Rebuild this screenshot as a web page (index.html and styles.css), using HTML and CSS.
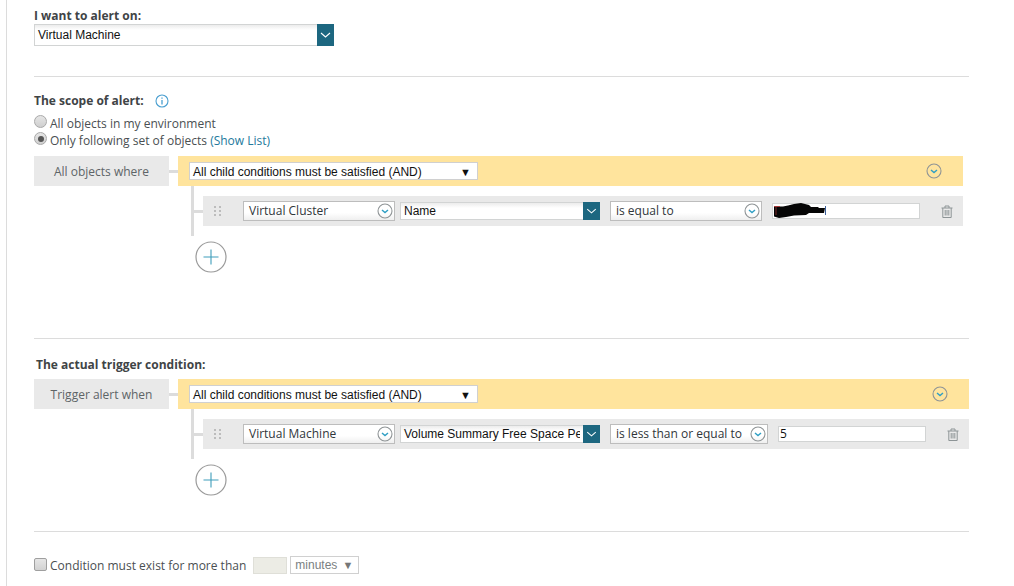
FILE: index.html
```html
<!DOCTYPE html>
<html lang="en">
<head>
<meta charset="utf-8">
<title>Alert</title>
<link rel="stylesheet" href="styles.css">
</head>
<body>
<svg class="defs" width="0" height="0" aria-hidden="true">
  <symbol id="circ" viewBox="0 0 16 16"><circle cx="8" cy="8" r="7" fill="none" stroke="#8f9496" stroke-width="1.1"/><path d="M5 7l3 2.6L11 7" fill="none" stroke="#2f9fc4" stroke-width="1.4"/></symbol>
  <symbol id="chev" viewBox="0 0 17 19"><path d="M4 7.5l4.5 4 4.500-4" fill="none" stroke="#fff" stroke-width="1.1"/></symbol>
  <symbol id="grip" viewBox="0 0 7 10"><path d="M0 0h2v2H0zM5 0h2v2H5zM0 4h2v2H0zM5 4h2v2H5zM0 8h2v2H0zM5 8h2v2H5z" fill="#bcbcbc"/></symbol>
  <symbol id="trash" viewBox="0 0 12 13"><path d="M.5 3h11M4 3V1h4v2M1.800 3v9.500h8.400V3M4.200 5v5.500M6 5v5.500M7.800 5v5.500" fill="none" stroke="#8d9496" stroke-width="1"/></symbol>
  <symbol id="plus" viewBox="0 0 32 32"><circle cx="16" cy="16" r="15" fill="#fff" stroke="#9a9a9a" stroke-width="1.200"/><path d="M16 8.500v15M8.500 16h15" fill="none" stroke="#3f9dbb" stroke-width="1.100"/></symbol>
</svg>
<main class="page">
  <section class="sec-target">
    <h2 class="head">I want to alert on:</h2>
    <div class="combo combo-target"><span class="combo-text">Virtual Machine</span><span class="combo-btn"><svg class="chev"><use href="#chev"/></svg></span></div>
  </section>
  <hr class="rule rule-a">
  <section class="sec-scope">
    <h2 class="head head-icon">The scope of alert:
      <svg class="info" viewBox="0 0 14 14"><circle cx="7" cy="7" r="6" fill="none" stroke="#4a9fd0" stroke-width="1.100"/><path d="M7 3.500v1.300M7 6v4.500" stroke="#4a9fd0" stroke-width="1.300" fill="none"/></svg>
    </h2>
    <label class="opt"><span class="radio"></span>All objects in my environment</label>
    <label class="opt"><span class="radio radio-on"></span>Only following set of objects <a class="link">(Show List)</a></label>
    <div class="builder">
      <div class="where">All objects where</div>
      <div class="group">
        <div class="group-bar">
          <div class="logic">All child conditions must be satisfied (AND)<span class="arrow">▼</span></div>
          <svg class="circ circ-bar"><use href="#circ"/></svg>
        </div>
        <div class="tree">
          <div class="item">
            <svg class="grip"><use href="#grip"/></svg>
            <div class="pick pick-field"><span>Virtual Cluster</span><svg class="circ"><use href="#circ"/></svg></div>
            <div class="combo combo-prop"><span class="combo-text">Name</span><span class="combo-btn"><svg class="chev"><use href="#chev"/></svg></span></div>
            <div class="pick pick-op"><span>is equal to</span><svg class="circ"><use href="#circ"/></svg></div>
            <div class="value"><svg class="blot" viewBox="0 0 56 15"><path d="M1 3.500h9l5-1 6-1.500 7-1 8 2 2 2 7 0 1 1h6l-1 5-15 0-3 2-12 .5-8 1.500-7 1-5-1.500z" fill="#050505"/><path d="M1 3.500h6" stroke="#a33a3a" stroke-width="1"/><path d="M3 4v8" stroke="#7a2a2a" stroke-width="1"/><path d="M52.500 3v9" stroke="#3a5f9a" stroke-width="1"/></svg></div>
            <svg class="trash"><use href="#trash"/></svg>
          </div>
        </div>
        <svg class="plus"><use href="#plus"/></svg>
      </div>
    </div>
  </section>
  <hr class="rule rule-b">
  <section class="sec-trigger">
    <h2 class="head head-trigger">The actual trigger condition:</h2>
    <div class="builder">
      <div class="where">Trigger alert when</div>
      <div class="group group-wide">
        <div class="group-bar">
          <div class="logic">All child conditions must be satisfied (AND)<span class="arrow">▼</span></div>
          <svg class="circ circ-bar"><use href="#circ"/></svg>
        </div>
        <div class="tree">
          <div class="item">
            <svg class="grip"><use href="#grip"/></svg>
            <div class="pick pick-field"><span>Virtual Machine</span><svg class="circ"><use href="#circ"/></svg></div>
            <div class="combo combo-prop"><span class="combo-text">Volume Summary Free Space Percent</span><span class="combo-btn"><svg class="chev"><use href="#chev"/></svg></span></div>
            <div class="pick pick-op pick-op-wide"><span>is less than or equal to</span><svg class="circ"><use href="#circ"/></svg></div>
            <div class="value">5</div>
            <svg class="trash"><use href="#trash"/></svg>
          </div>
        </div>
        <svg class="plus"><use href="#plus"/></svg>
      </div>
    </div>
  </section>
  <hr class="rule rule-c">
  <section class="sustain">
    <span class="check"></span>
    <span class="sustain-label">Condition must exist for more than</span>
    <span class="minutes-input"></span>
    <span class="unit">minutes<span class="unit-arrow">▼</span></span>
  </section>
</main>
</body>
</html>
```
FILE: styles.css
```css
* { box-sizing: border-box; }
html, body { margin: 0; height: 100%; overflow: hidden; background: #fff; }
body { font-family: "Open Sans", sans-serif; font-size: 12px; color: #4a4f52; }
.defs { position: absolute; }
.page {
  margin-left: 6px;
  width: 964px;
  height: 586px;
  padding: 8px 0 0 27px;
  border-left: 1px solid #dcdcdc;
}
.head { margin: 0; font-size: 12px; line-height: 16px; font-weight: 700; color: #3f4446; }
.combo {
  display: flex;
  border: 1px solid #d2d4d4;
  background: linear-gradient(#ececec, #fff 5px);
  font-family: "Liberation Sans", Arial, sans-serif;
  font-size: 12px;
  color: #111;
}
.combo-text { flex: 1; min-width: 0; white-space: nowrap; overflow: hidden; margin-right: 3px; padding-left: 3px; line-height: 20px; }
.combo-btn { width: 17px; flex: none; background: #1d6780; margin: -1px -1px -1px 0; display: flex; }
.chev { width: 17px; height: 19px; }
.combo-target { width: 300px; height: 22px; }
.combo-target .combo-btn { height: 22px; }
.combo-target .chev { height: 22px; }
.rule { border: 0; border-top: 1px solid #dcdcdc; margin: 0; width: 935px; }
.rule-a { margin-top: 30px; }
.sec-scope { padding-top: 16px; }
.head-icon { display: flex; align-items: center; gap: 11px; }
.info { width: 14px; height: 14px; }
.opt { display: flex; align-items: center; height: 17px; white-space: pre; }
.sec-scope .head { margin-bottom: 6px; }
.radio {
  width: 13px; height: 13px; margin-right: 3px; border-radius: 50%;
  border: 1px solid #a9a9a9;
  background: linear-gradient(#e6e6e6, #cfcfcf);
  position: relative; top: -2px;
}
.radio-on::after {
  content: ""; position: absolute; left: 2.5px; top: 2.5px; width: 6px; height: 6px;
  border-radius: 50%; background: #555;
}
.link { color: #23799c; }
.builder { display: flex; align-items: flex-start; }
.sec-scope .builder { margin-top: 7px; }
.where {
  flex: none; width: 135px; height: 30px; line-height: 31px;
  background: #e9e9e9; text-align: center; color: #5d6467; margin-right: 9px;
  position: relative; font-size: 12px;
}
.where::after { content: ""; position: absolute; left: 135px; top: 14px; width: 9px; height: 3px; background: #dcdcdc; }
.group { width: 785px; }
.group-wide { width: 791px; }
.group-bar {
  height: 30px; background: #ffe49d; display: flex; align-items: center;
  padding: 0 21px 0 11px; justify-content: space-between;
}
.logic {
  width: 289px; height: 18px; display: flex; justify-content: space-between; align-items: center;
  padding: 1px 6px 0 3px; background: #fff; border: 1px solid #d0d0d0;
  font-family: "Liberation Sans", Arial, sans-serif; font-size: 12px; color: #111;
}
.arrow { font-size: 11px; color: #111; }
.circ { width: 16px; height: 16px; flex: none; }
.tree {
  margin-left: 13px; padding: 10px 0 10px 9px; height: 50px;
  border-left: 3px solid #dcdcdc; position: relative;
}
.tree::before { content: ""; position: absolute; left: 0; top: 24px; width: 9px; height: 3px; background: #dcdcdc; }
.item { display: flex; align-items: center; height: 30px; background: #e9e9e9; padding-left: 11px; }
.grip { width: 7px; height: 10px; margin-right: 22px; flex: none; }
.pick {
  display: flex; align-items: center; justify-content: space-between;
  height: 20px; background: linear-gradient(#fff 60%, #efefef); border: 1px solid #bdbdbd;
  padding: 0 1px 2px 5px; color: #30363a; font-size: 12px;
}
.pick .circ { position: relative; top: 1px; }
.pick-field { width: 152px; margin-right: 5px; }
.combo-prop { width: 200px; height: 18px; margin-right: 10px; }
.combo-prop .combo-text { line-height: 16px; }
.combo-prop .combo-btn, .combo-prop .chev { height: 18px; }
.pick-op { width: 152px; margin-right: 10px; }
.pick-op-wide { width: 158px; }
.value {
  width: 148px; height: 16px; background: #fff; border: 1px solid #d2d4d4; position: relative;
  font-size: 12px; line-height: 14px; padding-left: 1px; color: #111;
}
.blot { position: absolute; left: 0; top: -1px; width: 56px; height: 15px; }
.trash { width: 12px; height: 13px; margin-left: 21px; flex: none; }
.plus { display: block; width: 32px; height: 32px; margin: 5px 0 0 17px; }
.rule-b { margin-top: 65px; }
.sec-trigger { padding-top: 18px; }
.head-trigger { margin: 0 0 6px 2px; }
.rule-c { margin-top: 35px; }
.sustain { display: flex; align-items: center; margin-top: 24px; height: 18px; }
.check {
  width: 13px; height: 13px; border: 1px solid #9f9f9f; border-radius: 2px;
  background: linear-gradient(#e6e6e6, #d2d2d2); margin-right: 3px; position: relative; top: -1px;
}
.sustain-label { margin-right: 7px; }
.minutes-input { width: 34px; height: 17px; background: #ecece5; border: 1px solid #dfdfd8; margin-right: 3px; }
.unit {
  width: 69px; height: 18px; border: 1px solid #d0d0d0; padding: 0 5px 0 4px;
  display: flex; align-items: center; justify-content: space-between;
  font-family: "Liberation Sans", Arial, sans-serif; font-size: 12px; color: #7a7f82;
}
.unit-arrow { font-size: 11px; color: #777; }
```
